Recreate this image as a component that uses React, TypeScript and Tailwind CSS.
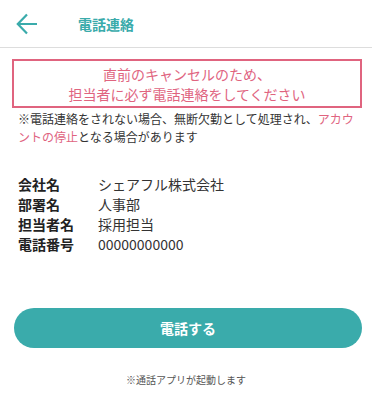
import React from "react";

export default function App() {
  const font = { fontFamily: '"Noto Sans CJK JP", "Noto Sans", sans-serif' };
  return (
    <div className="w-[372px] h-[406px] bg-white text-[#333]" style={font}>
      <header className="h-[48px] flex items-center border-b border-[#dddddd]">
        <div className="w-[54px] pl-[16px] flex items-center">
          <svg width="22" height="22" viewBox="0 0 22 22" fill="none">
            <path d="M21 11H2M11 1.5L1.8 11L11 20.5" stroke="#3aabab" strokeWidth="2.2" strokeLinecap="butt" />
          </svg>
        </div>
        <h1 className="ml-[24px] text-[14px] font-bold text-[#3aabab] leading-none">電話連絡</h1>
      </header>
      <div className="px-[12px] pt-[11px]">
        <div className="border-2 border-[#e0647f] w-[350px] h-[49px] flex flex-col items-center justify-center text-[14px] leading-[20px] text-[#e0647f]">
          <p>直前のキャンセルのため、</p>
          <p>担当者に必ず電話連絡をしてください</p>
        </div>
        <p className="pl-[6px] pt-[2px] text-[12px] leading-[18px] text-[#333]">
          ※電話連絡をされない場合、無断欠勤として処理され、<span className="text-[#e0647f]">アカウントの停止</span>となる場合があります
        </p>
      </div>
      <dl className="mt-[28px] pl-[18px] grid grid-cols-[80px_1fr] text-[14px] leading-[20px]">
        <dt className="font-bold text-[#222]">会社名</dt>
        <dd className="text-[#333]">シェアフル株式会社</dd>
        <dt className="font-bold text-[#222]">部署名</dt>
        <dd className="text-[#333]">人事部</dd>
        <dt className="font-bold text-[#222]">担当者名</dt>
        <dd className="text-[#333]">採用担当</dd>
        <dt className="font-bold text-[#222]">電話番号</dt>
        <dd className="text-[#333]">00000000000</dd>
      </dl>
      <div className="mt-[54px] pl-[14px]">
        <button className="w-[348px] h-[40px] rounded-full bg-[#3aabab] text-white font-bold text-[14px] flex items-center justify-center">
          電話する
        </button>
      </div>
      <p className="mt-[25px] text-center text-[10px] leading-[14px] text-[#555]">※通話アプリが起動します</p>
    </div>
  );
}
